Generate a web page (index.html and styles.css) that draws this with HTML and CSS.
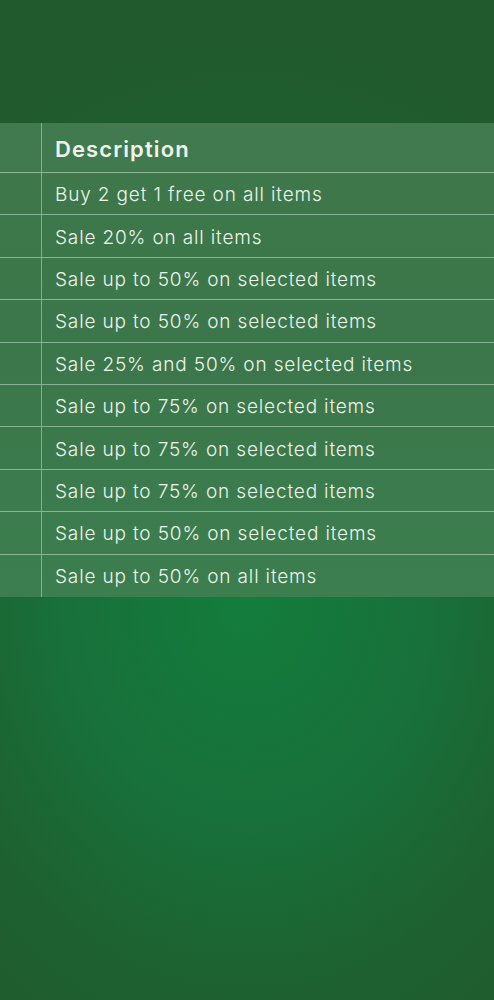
FILE: index.html
```html
<!DOCTYPE html>
<html lang="en">
<head>
<meta charset="utf-8">
<title>Promotions</title>
<link rel="stylesheet" href="styles.css">
</head>
<body>
<main class="page">
  <div class="table">
    <div class="row head">
      <div class="cell key"></div>
      <div class="cell desc">Description</div>
    </div>
    <div class="row"><div class="cell key"></div><div class="cell desc">Buy 2 get 1 free on all items</div></div>
    <div class="row"><div class="cell key"></div><div class="cell desc">Sale 20% on all items</div></div>
    <div class="row"><div class="cell key"></div><div class="cell desc">Sale up to 50% on selected items</div></div>
    <div class="row"><div class="cell key"></div><div class="cell desc">Sale up to 50% on selected items</div></div>
    <div class="row"><div class="cell key"></div><div class="cell desc">Sale 25% and 50% on selected items</div></div>
    <div class="row"><div class="cell key"></div><div class="cell desc">Sale up to 75% on selected items</div></div>
    <div class="row"><div class="cell key"></div><div class="cell desc">Sale up to 75% on selected items</div></div>
    <div class="row"><div class="cell key"></div><div class="cell desc">Sale up to 75% on selected items</div></div>
    <div class="row"><div class="cell key"></div><div class="cell desc">Sale up to 50% on selected items</div></div>
    <div class="row last"><div class="cell key"></div><div class="cell desc">Sale up to 50% on all items</div></div>
  </div>
</main>
</body>
</html>
```
FILE: styles.css
```css
html, body {
  margin: 0;
  padding: 0;
}
body {
  width: 494px;
  height: 1000px;
  overflow: hidden;
  font-family: "Inter", "Open Sans", sans-serif;
  color: #eef4ec;
  background: radial-gradient(ellipse 460px 560px at 247px 600px, #137d3c 0%, #18703a 40%, #1e6130 70%, #205a2d 100%);
}
.page {
  padding-top: 123px;
}
.table {
  display: flex;
  flex-direction: column;
  background: linear-gradient(180deg, #3e784b 0%, #3b774a 50%, #3c7e4f 100%);
}
.row {
  display: grid;
  grid-template-columns: 42px 1fr;
  height: 42.4px;
  box-sizing: border-box;
  border-bottom: 1px solid rgba(200, 230, 205, 0.55);
}
.row.last {
  border-bottom: none;
}
.row.head {
  height: 50px;
  background: rgba(255, 255, 255, 0.02);
}
.cell.key {
  border-right: 1px solid rgba(200, 230, 205, 0.5);
}
.cell.desc {
  display: flex;
  align-items: center;
  padding-left: 13px;
  padding-top: 2px;
  font-size: 19px;
  font-weight: 350;
  letter-spacing: 0.85px;
  white-space: nowrap;
}
.head .cell.desc {
  font-size: 22px;
  font-weight: 600;
  letter-spacing: 1.1px;
  padding-top: 2px;
}
```
